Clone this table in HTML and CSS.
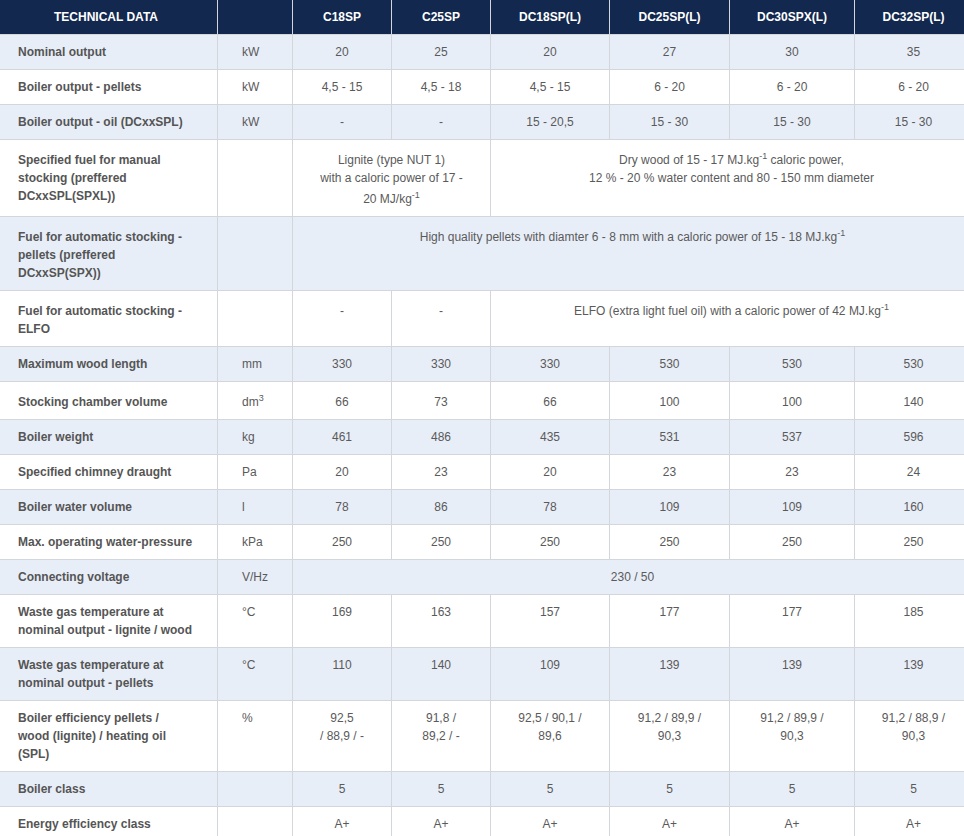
FILE: index.html
```html
<!DOCTYPE html>
<html lang="en">
<head>
<meta charset="utf-8">
<title>Technical data</title>
<link rel="stylesheet" href="styles.css">
</head>
<body>
<table class="spec">
  <colgroup>
    <col class="c-label">
    <col class="c-unit">
    <col class="c-a">
    <col class="c-b">
    <col class="c-c">
    <col class="c-d">
    <col class="c-e">
    <col class="c-f">
  </colgroup>
  <thead>
    <tr>
      <th>TECHNICAL DATA</th>
      <th></th>
      <th>C18SP</th>
      <th>C25SP</th>
      <th>DC18SP(L)</th>
      <th>DC25SP(L)</th>
      <th>DC30SPX(L)</th>
      <th>DC32SP(L)</th>
    </tr>
  </thead>
  <tbody>
    <tr class="alt">
      <td class="label">Nominal output</td><td class="unit">kW</td>
      <td>20</td><td>25</td><td>20</td><td>27</td><td>30</td><td>35</td>
    </tr>
    <tr>
      <td class="label">Boiler output - pellets</td><td class="unit">kW</td>
      <td>4,5 - 15</td><td>4,5 - 18</td><td>4,5 - 15</td><td>6 - 20</td><td>6 - 20</td><td>6 - 20</td>
    </tr>
    <tr class="alt">
      <td class="label">Boiler output - oil (DCxxSPL)</td><td class="unit">kW</td>
      <td>-</td><td>-</td><td>15 - 20,5</td><td>15 - 30</td><td>15 - 30</td><td>15 - 30</td>
    </tr>
    <tr>
      <td class="label">Specified fuel for manual<br>stocking (preffered<br>DCxxSPL(SPXL))</td><td class="unit"></td>
      <td colspan="2">Lignite (type NUT 1)<br>with a caloric power of 17 -<br>20 MJ/kg<sup>-1</sup></td>
      <td colspan="4">Dry wood of 15 - 17 MJ.kg<sup>-1</sup> caloric power,<br>12 % - 20 % water content and 80 - 150 mm diameter</td>
    </tr>
    <tr class="alt">
      <td class="label">Fuel for automatic stocking -<br>pellets (preffered<br>DCxxSP(SPX))</td><td class="unit"></td>
      <td colspan="6">High quality pellets with diamter 6 - 8 mm with a caloric power of 15 - 18 MJ.kg<sup>-1</sup></td>
    </tr>
    <tr>
      <td class="label">Fuel for automatic stocking -<br>ELFO</td><td class="unit"></td>
      <td>-</td><td>-</td>
      <td colspan="4">ELFO (extra light fuel oil) with a caloric power of 42 MJ.kg<sup>-1</sup></td>
    </tr>
    <tr class="alt">
      <td class="label">Maximum wood length</td><td class="unit">mm</td>
      <td>330</td><td>330</td><td>330</td><td>530</td><td>530</td><td>530</td>
    </tr>
    <tr>
      <td class="label">Stocking chamber volume</td><td class="unit">dm<sup>3</sup></td>
      <td>66</td><td>73</td><td>66</td><td>100</td><td>100</td><td>140</td>
    </tr>
    <tr class="alt">
      <td class="label">Boiler weight</td><td class="unit">kg</td>
      <td>461</td><td>486</td><td>435</td><td>531</td><td>537</td><td>596</td>
    </tr>
    <tr>
      <td class="label">Specified chimney draught</td><td class="unit">Pa</td>
      <td>20</td><td>23</td><td>20</td><td>23</td><td>23</td><td>24</td>
    </tr>
    <tr class="alt">
      <td class="label">Boiler water volume</td><td class="unit">l</td>
      <td>78</td><td>86</td><td>78</td><td>109</td><td>109</td><td>160</td>
    </tr>
    <tr>
      <td class="label">Max. operating water-pressure</td><td class="unit">kPa</td>
      <td>250</td><td>250</td><td>250</td><td>250</td><td>250</td><td>250</td>
    </tr>
    <tr class="alt">
      <td class="label">Connecting voltage</td><td class="unit">V/Hz</td>
      <td colspan="6">230 / 50</td>
    </tr>
    <tr>
      <td class="label">Waste gas temperature at<br>nominal output - lignite / wood</td><td class="unit">°C</td>
      <td>169</td><td>163</td><td>157</td><td>177</td><td>177</td><td>185</td>
    </tr>
    <tr class="alt">
      <td class="label">Waste gas temperature at<br>nominal output - pellets</td><td class="unit">°C</td>
      <td>110</td><td>140</td><td>109</td><td>139</td><td>139</td><td>139</td>
    </tr>
    <tr>
      <td class="label">Boiler efficiency pellets /<br>wood (lignite) / heating oil<br>(SPL)</td><td class="unit">%</td>
      <td>92,5<br>/ 88,9 / -</td><td>91,8 /<br>89,2 / -</td><td>92,5 / 90,1 /<br>89,6</td><td>91,2 / 89,9 /<br>90,3</td><td>91,2 / 89,9 /<br>90,3</td><td>91,2 / 88,9 /<br>90,3</td>
    </tr>
    <tr class="alt">
      <td class="label">Boiler class</td><td class="unit"></td>
      <td>5</td><td>5</td><td>5</td><td>5</td><td>5</td><td>5</td>
    </tr>
    <tr>
      <td class="label">Energy efficiency class</td><td class="unit"></td>
      <td>A+</td><td>A+</td><td>A+</td><td>A+</td><td>A+</td><td>A+</td>
    </tr>
  </tbody>
</table>
</body>
</html>
```
FILE: styles.css
```css
html, body {
  margin: 0;
  padding: 0;
  background: #ffffff;
  overflow: hidden;
}

.spec {
  margin-left: -6px;
  width: 978px;
  table-layout: fixed;
  border-collapse: collapse;
  font-family: "Liberation Sans", Arial, sans-serif;
  font-size: 12px;
  line-height: 18px;
  color: #5a5a5a;
}

.c-label { width: 223px; }
.c-unit { width: 75px; }
.c-a { width: 99px; }
.c-b { width: 99px; }
.c-c { width: 119px; }
.c-d { width: 120px; }
.c-e { width: 125px; }
.c-f { width: 118px; }

.spec th,
.spec td {
  border: 1px solid #d3d6db;
  padding: 8px 6px;
  text-align: center;
}

.spec th {
  border-top: 0;
  background: #12284f;
  color: #ffffff;
  font-weight: bold;
  vertical-align: middle;
}

.spec td {
  vertical-align: baseline;
}

.spec tr.alt td {
  background: #e8eef8;
}

.spec td.label {
  text-align: left;
  padding-left: 23px;
  font-weight: bold;
  color: #555555;
}

.spec td.unit {
  text-align: left;
  padding-left: 24px;
}

.spec sup {
  font-size: 9px;
  line-height: 16px;
}
```
